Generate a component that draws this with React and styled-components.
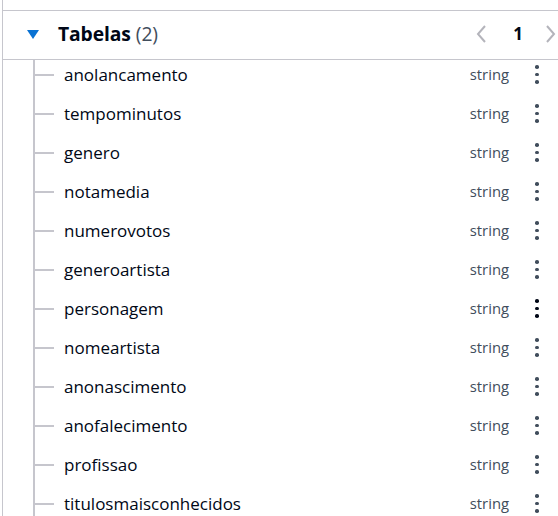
import React from "react";
import styled, { createGlobalStyle } from "styled-components";

const Global = createGlobalStyle`
  html, body { margin: 0; padding: 0; background: #ffffff; overflow: hidden; }
  body { font-family: "Open Sans", "Noto Sans", Arial, sans-serif; color: #000716; }
`;

const Panel = styled.div`
  margin-left: 2px;
  width: 556px;
  height: 516px;
  border-left: 1px solid #c6c6cd;
  box-sizing: border-box;
  overflow: hidden;
`;

const TopStrip = styled.div`
  height: 10px;
  border-bottom: 1px solid #c6c6cd;
`;

const Header = styled.div`
  height: 49px;
  box-sizing: border-box;
  border-bottom: 1px solid #c6c6cd;
  display: flex;
  align-items: center;
  padding: 0 1px 3px 24px;
`;

const Caret = styled.span`
  width: 0;
  height: 0;
  border-left: 6px solid transparent;
  border-right: 6px solid transparent;
  border-top: 9px solid #0972d3;
  margin-top: 2px;
`;

const Title = styled.h2`
  margin: 0 0 0 19px;
  font-size: 19.3px;
  font-weight: 700;
  color: #000716;
  letter-spacing: -0.1px;
`;

const Count = styled.span`
  font-weight: 400;
  color: #414d5c;
  margin-left: 5px;
`;

const Pager = styled.div`
  margin-left: auto;
  display: flex;
  align-items: center;
`;

const PageNum = styled.span`
  font-weight: 700;
  font-size: 17px;
  color: #000716;
  margin: 0 22px 0 26px;
`;

const Tree = styled.ul`
  list-style: none;
  margin: 0 0 0 30px;
  padding: 0;
  border-left: 2px solid #c6c6cd;
`;

const Row = styled.li`
  height: 39px;
  box-sizing: border-box;
  display: flex;
  align-items: center;
  padding: 0 11px 11px 0;
`;

const Tick = styled.span`
  width: 19px;
  height: 2px;
  background: #c6c6cd;
  margin: 2px 10px 0 0;
  flex-shrink: 0;
`;

const Name = styled.span`
  flex: 1;
  font-size: 17px;
  color: #000716;
  white-space: nowrap;
`;

const Type = styled.span`
  font-size: 14.8px;
  color: #414d5c;
  margin-right: 18px;
`;

const Kebab = styled.span`
  width: 20px;
  display: flex;
  flex-direction: column;
  align-items: center;
  gap: 4px;
  margin-top: 1px;
`;

const Dot = styled.span`
  width: 3.5px;
  height: 3.5px;
  border-radius: 50%;
  background: ${(p) => (p.$dark ? "#000716" : "#414d5c")};
`;

const Chevron = ({ dir }) => (
  <svg width="12" height="20" viewBox="0 0 12 20">
    <polyline
      points={dir === "left" ? "10,2 3,10 10,18" : "2,2 9,10 2,18"}
      fill="none"
      stroke="#b4b4bb"
      strokeWidth="2"
      strokeLinejoin="miter"
    />
  </svg>
);

const columns = [
  "anolancamento",
  "tempominutos",
  "genero",
  "notamedia",
  "numerovotos",
  "generoartista",
  "personagem",
  "nomeartista",
  "anonascimento",
  "anofalecimento",
  "profissao",
  "titulosmaisconhecidos",
];

export default function App() {
  return (
    <>
      <Global />
      <Panel>
        <TopStrip />
        <Header>
          <Caret />
          <Title>
            Tabelas<Count>(2)</Count>
          </Title>
          <Pager>
            <Chevron dir="left" />
            <PageNum>1</PageNum>
            <Chevron dir="right" />
          </Pager>
        </Header>
        <Tree>
          {columns.map((c) => (
            <Row key={c}>
              <Tick />
              <Name>{c}</Name>
              <Type>string</Type>
              <Kebab>
                <Dot $dark={c === "personagem"} />
                <Dot $dark={c === "personagem"} />
                <Dot $dark={c === "personagem"} />
              </Kebab>
            </Row>
          ))}
        </Tree>
      </Panel>
    </>
  );
}
